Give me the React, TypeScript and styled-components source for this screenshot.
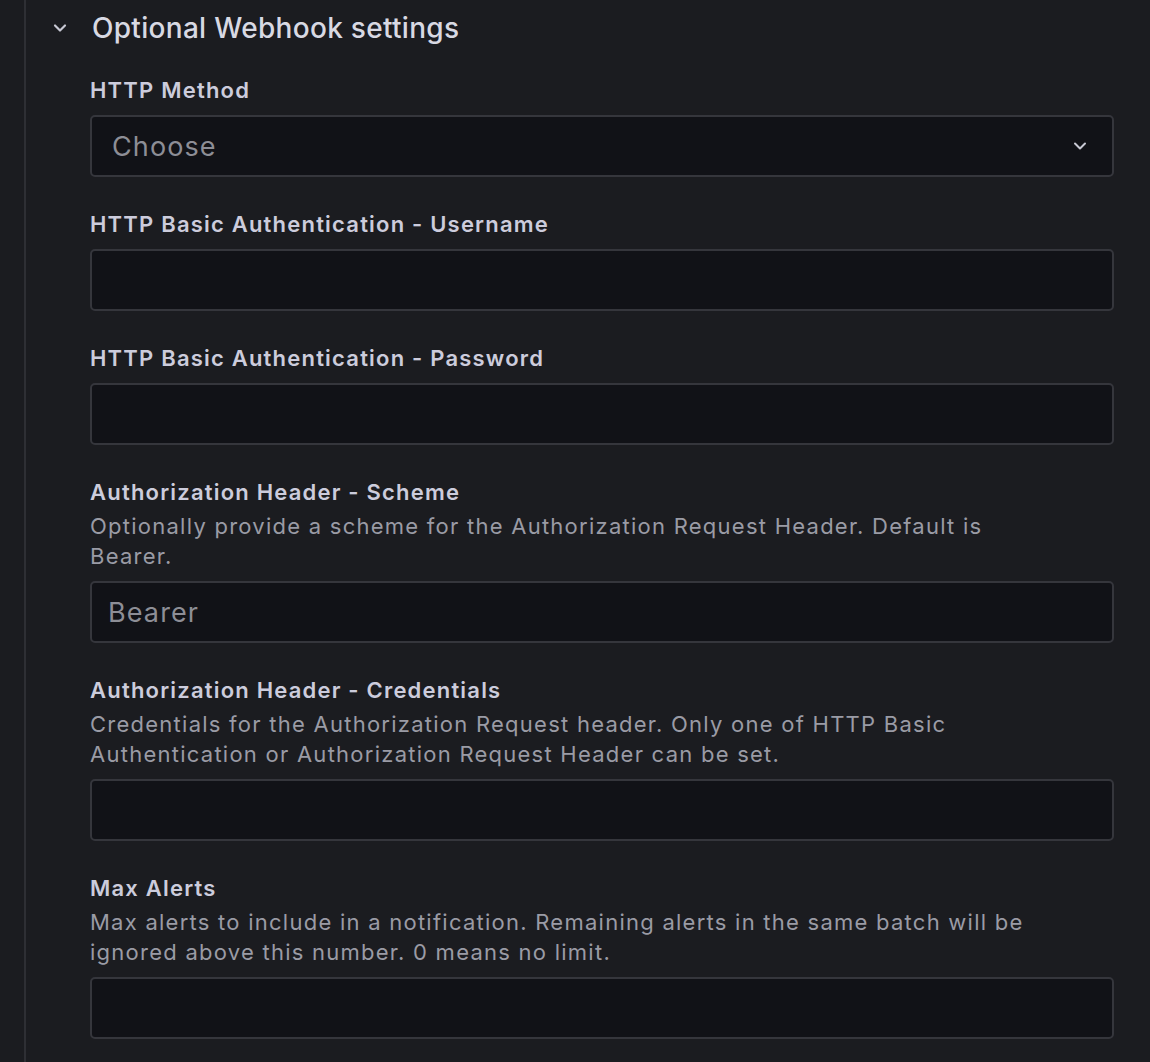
import styled, { createGlobalStyle } from "styled-components"

const GlobalStyle = createGlobalStyle`
  html, body {
    margin: 0;
    padding: 0;
    background: #1b1c20;
  }
  body {
    font-family: Inter, "Noto Sans", sans-serif;
    color: #ccccdc;
  }
`

const Page = styled.div`
  width: 1150px;
  height: 1062px;
  overflow: hidden;
  display: flex;
  background: #1b1c20;
`

const Rail = styled.div`
  width: 24px;
  flex-shrink: 0;
  border-right: 2px solid #2e2f34;
`

const Section = styled.section`
  flex: 1;
  padding: 8px 36px 0 24px;
`

const SectionHeader = styled.button`
  display: flex;
  align-items: center;
  gap: 22px;
  background: transparent;
  border: none;
  padding: 0;
  margin: 0;
  height: 40px;
  color: #d8d9e3;
  font-family: inherit;
  font-size: 28px;
  font-weight: 500;
  letter-spacing: 0.3px;
  cursor: pointer;
`

const Chevron = styled.span`
  display: flex;
  width: 20px;
  justify-content: center;
  color: #c8c9d4;
`

const Fields = styled.div`
  padding-left: 40px;
  padding-top: 27px;
`

const Field = styled.div`
  margin-bottom: 32px;
`

const LabelBlock = styled.div`
  margin-bottom: 10px;
  max-width: 955px;
`

const Label = styled.label`
  display: block;
  font-size: 22px;
  line-height: 30px;
  font-weight: 600;
  letter-spacing: 1.2px;
  color: #ccccdc;
`

const Description = styled.div`
  margin-top: 4px;
  font-size: 22px;
  line-height: 30px;
  font-weight: 400;
  letter-spacing: 1.25px;
  color: #9a9ba5;
`

const InputBox = styled.div`
  height: 62px;
  box-sizing: border-box;
  background: #111217;
  border: 2px solid #35363c;
  border-radius: 5px;
  display: flex;
  align-items: center;
  padding: 0 22px 0 16px;
`

const Placeholder = styled.span<{ $indent?: number }>`
  flex: 1;
  font-size: 27px;
  letter-spacing: 1.1px;
  color: #8d8e96;
  padding-left: ${({ $indent }) => $indent ?? 0}px;
`

const ChevronDown = ({ size, stroke }: { size: number; stroke: number }) => (
  <svg width={size} height={size} viewBox="0 0 24 24" fill="none" stroke="currentColor" strokeWidth={stroke} strokeLinecap="round" strokeLinejoin="round">
    <path d="M6 9l6 6 6-6" />
  </svg>
)

interface FieldDef {
  label: string
  description?: string
  placeholder?: string
  select?: boolean
}

const fields: FieldDef[] = [
  { label: "HTTP Method", placeholder: "Choose", select: true },
  { label: "HTTP Basic Authentication - Username" },
  { label: "HTTP Basic Authentication - Password" },
  {
    label: "Authorization Header - Scheme",
    description: "Optionally provide a scheme for the Authorization Request Header. Default is Bearer.",
    placeholder: "Bearer",
  },
  {
    label: "Authorization Header - Credentials",
    description:
      "Credentials for the Authorization Request header. Only one of HTTP Basic Authentication or Authorization Request Header can be set.",
  },
  {
    label: "Max Alerts",
    description:
      "Max alerts to include in a notification. Remaining alerts in the same batch will be ignored above this number. 0 means no limit.",
  },
]

export default function App() {
  return (
    <Page>
      <GlobalStyle />
      <Rail />
      <Section>
        <SectionHeader>
          <Chevron>
            <ChevronDown size={20} stroke={2.6} />
          </Chevron>
          Optional Webhook settings
        </SectionHeader>
        <Fields>
          {fields.map((f) => (
            <Field key={f.label}>
              <LabelBlock>
                <Label>{f.label}</Label>
                {f.description && <Description>{f.description}</Description>}
              </LabelBlock>
              <InputBox>
                <Placeholder $indent={f.select ? 4 : 0}>{f.placeholder}</Placeholder>
                {f.select && (
                  <Chevron>
                    <ChevronDown size={22} stroke={2.4} />
                  </Chevron>
                )}
              </InputBox>
            </Field>
          ))}
        </Fields>
      </Section>
    </Page>
  )
}
